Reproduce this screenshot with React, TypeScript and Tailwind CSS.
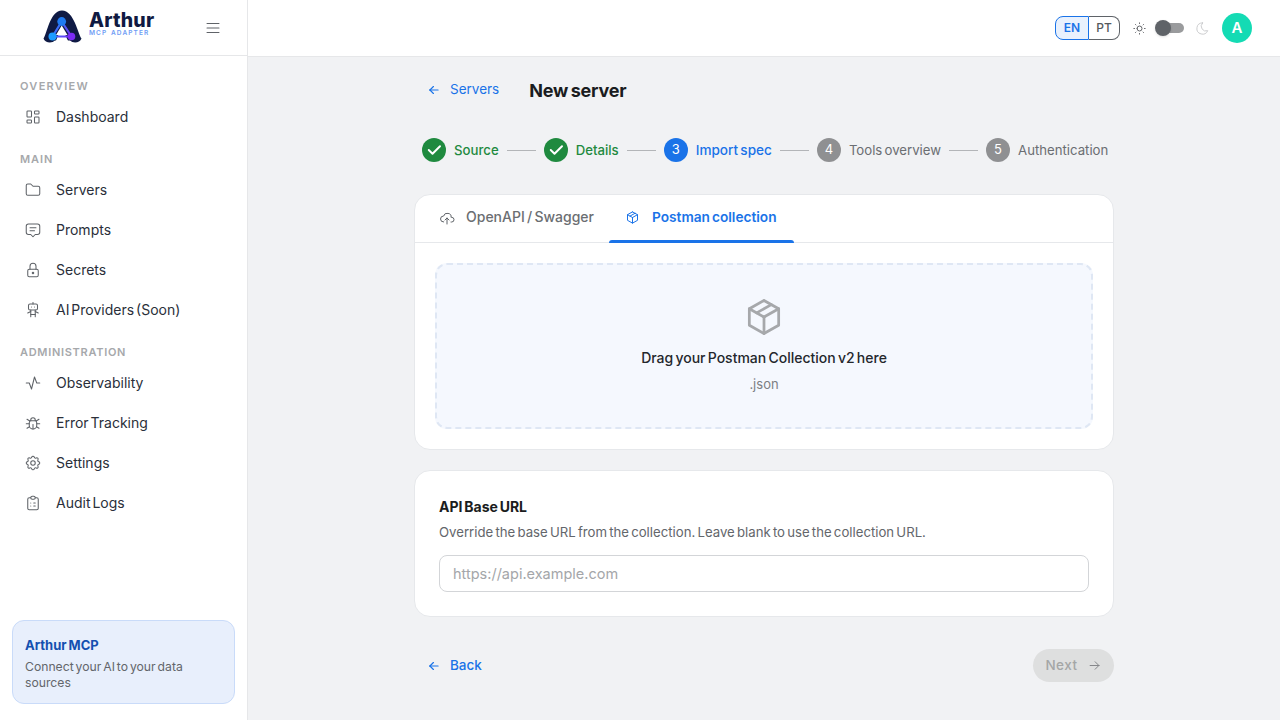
import React from "react";
import {
  TbLayoutDashboard, TbFolder, TbMessage2, TbLock, TbRobot, TbActivity, TbBug, TbSettings, TbClipboardList,
  TbMenu2, TbSun, TbMoon, TbArrowLeft, TbArrowRight, TbCheck, TbCloudUpload, TbPackage,
} from "react-icons/tb";

const font = { fontFamily: '"Inter", "Noto Sans", sans-serif' };

function Logo() {
  return (
    <div className="flex items-center w-[111px] h-[34px] gap-[7px] -mt-[2px]">
      <svg width="39" height="33" viewBox="0 0 39 33" className="shrink-0">
        <defs>
          <linearGradient id="lg" x1="0" y1="0" x2="1" y2="0.6">
            <stop offset="0" stopColor="#1c8cff" />
            <stop offset="1" stopColor="#6a3cf5" />
          </linearGradient>
        </defs>
        <path d="M0.5 28.5C4 24 7 0.5 19 0.5C31 0.5 35 24 38.5 28.5C37 33 30 33.5 27 30.5L12 30.5C9 33.5 2 33 0.5 28.5Z" fill="#0f1a44" />
        <path d="M18.7 17L12 33H26Z" fill="#fff" />
        <path d="M18.7 11.5L9.5 26.5H28.5Z" fill="none" stroke="url(#lg)" strokeWidth="2.2" strokeLinejoin="round" />
        <path d="M18.7 15.5L13 25H24.5Z" fill="#fff" />
        <circle cx="18.7" cy="11.5" r="4.4" fill="#1f7bf2" />
        <circle cx="9.5" cy="26.5" r="4" fill="#1c9cff" />
        <circle cx="28.5" cy="26.5" r="3.8" fill="#7c2cf5" />
      </svg>
      <div className="flex flex-col whitespace-nowrap [word-spacing:1px] -mt-[6px]">
        <span className="text-[19.5px] leading-[20px] font-extrabold text-[#101a42] tracking-[0.2px]">Arthur</span>
        <span className="text-[6.5px] leading-[7px] font-semibold tracking-[1.1px] text-[#6f9df5]">MCP ADAPTER</span>
      </div>
    </div>
  );
}

function Label({ children, className }: { children: React.ReactNode; className: string }) {
  return (
    <div className={`h-[22px] pl-5 pt-[1px] flex items-center text-[11px] font-semibold text-[#a6a8ab] ${className}`}>{children}</div>
  );
}

function Item({ icon: Icon, children }: { icon: React.ComponentType<{ size?: number; strokeWidth?: number; className?: string }>; children: React.ReactNode }) {
  return (
    <div className="h-10 flex items-center pl-[24px] text-[14px] text-[#2a2f3a] [word-spacing:-2px]">
      <Icon size={18} strokeWidth={1.4} className="text-[#5f6368] shrink-0" />
      <span className="ml-[14px] -mt-[1px] whitespace-nowrap">{children}</span>
    </div>
  );
}

function Step({ n, label, state }: { n: number; label: string; state: "done" | "active" | "todo" }) {
  const bg = state === "done" ? "bg-[#1f8a3f]" : state === "active" ? "bg-[#1a73e8]" : "bg-[#8f9092]";
  const tx = state === "done" ? "text-[#1f8a3f] font-medium text-[13.2px]" : state === "active" ? "text-[#1a73e8] font-medium text-[13.6px]" : "text-[#6b6e72] font-normal text-[13.2px]";
  return (
    <div className="flex items-center gap-2 shrink-0">
      <div className={`w-6 h-6 rounded-full flex items-center justify-center text-white text-[13px] ${bg}`}>
        {state === "done" ? <TbCheck size={18} strokeWidth={2.6} /> : n}
      </div>
      <span className={`mt-[1px] whitespace-nowrap ${tx}`}>{label}</span>
    </div>
  );
}

function Line() {
  return <div className="w-[29px] h-px bg-[#b3b5b8] mx-2 shrink-0" />;
}

export default function App() {
  return (
    <div className="w-[1280px] h-[720px] flex bg-[#f1f2f4] overflow-hidden [word-spacing:-1.5px]" style={font}>
      <aside className="w-[248px] h-full bg-white border-r border-[#e6e7e9] flex flex-col shrink-0">
        <div className="h-[56px] border-b border-[#e6e7e9] flex items-center pl-[43px] shrink-0">
          <Logo />
          <TbMenu2 size={18} strokeWidth={1.4} className="text-[#5f6368] ml-[50px]" />
        </div>
        <nav className="pt-[19px] flex-1">
          <Label className="tracking-[1.3px]">OVERVIEW</Label>
          <Item icon={TbLayoutDashboard}>Dashboard</Item>
          <div className="h-[11px]" />
          <Label className="tracking-[0.9px]">MAIN</Label>
          <Item icon={TbFolder}>Servers</Item>
          <Item icon={TbMessage2}>Prompts</Item>
          <Item icon={TbLock}>Secrets</Item>
          <Item icon={TbRobot}>AI Providers (Soon)</Item>
          <div className="h-[11px]" />
          <Label className="tracking-[0.7px]">ADMINISTRATION</Label>
          <Item icon={TbActivity}>Observability</Item>
          <Item icon={TbBug}>Error Tracking</Item>
          <Item icon={TbSettings}>Settings</Item>
          <Item icon={TbClipboardList}>Audit Logs</Item>
        </nav>
        <div className="mx-3 mb-4 h-[84px] rounded-xl bg-[#e8effc] border border-[#c9dbf9] px-3 pt-[14px]">
          <div className="text-[13px] leading-[20px] font-bold text-[#1450b0] [word-spacing:-1px]">Arthur MCP</div>
          <div className="text-[12.2px] leading-4 mt-[4px] text-[#63666b]">Connect your AI to your data sources</div>
        </div>
      </aside>

      <div className="flex-1 flex flex-col min-w-0">
        <header className="h-[57px] bg-white border-b border-[#e6e7e9] flex items-center justify-end pr-[28px] shrink-0">
          <div className="flex h-6 text-[12px]">
            <div className="w-[34px] flex items-center justify-center rounded-l-lg border border-[#1a73e8] bg-[#e9f1fd] text-[#1a73e8] font-semibold">EN</div>
            <div className="w-[31px] flex items-center justify-center rounded-r-lg border border-l-0 border-[#5f6368] text-[#55585c] font-medium">PT</div>
          </div>
          <TbSun size={15} strokeWidth={1.5} className="text-[#55585c] ml-[12px]" />
          <div className="relative w-[24px] h-[10px] rounded-full bg-[#9a9b9d] ml-[13px] mr-[2px]">
            <div className="absolute -left-[5px] -top-[3px] w-4 h-4 rounded-full bg-[#5f6368] shadow-sm" />
          </div>
          <TbMoon size={15} strokeWidth={1.5} className="text-[#c9cacc] ml-[9px]" />
          <div className="w-[30px] h-[30px] rounded-full bg-[#14dbb4] text-white font-semibold text-[15px] flex items-center justify-center ml-[12px]">A</div>
        </header>

        <main className="w-[700px] mx-auto pt-[20px]">
          <div className="flex items-center h-[26px] pl-[13px] whitespace-nowrap">
            <TbArrowLeft size={14} strokeWidth={2} className="text-[#1a73e8]" />
            <span className="text-[13.5px] text-[#1a73e8] ml-[9px] -mt-[1px]">Servers</span>
            <h1 className="text-[18px] font-bold text-[#1a1c20] ml-[30px] tracking-[-0.2px]">New server</h1>
          </div>
          <div className="flex items-center mt-[35px] pl-2">
            <Step n={1} label="Source" state="done" />
            <Line />
            <Step n={2} label="Details" state="done" />
            <Line />
            <Step n={3} label="Import spec" state="active" />
            <Line />
            <Step n={4} label="Tools overview" state="todo" />
            <Line />
            <Step n={5} label="Authentication" state="todo" />
          </div>

          <section className="mt-[32px] h-[256px] bg-white rounded-2xl border border-[#e6e8eb] overflow-hidden">
            <div className="h-[48px] border-b border-[#e6e8eb] flex pl-[8px]">
              <div className="w-[186px] flex items-center pl-[16px] text-[14px] font-medium text-[#6b6e72] whitespace-nowrap">
                <TbCloudUpload size={16} strokeWidth={1.5} className="text-[#5f6368] -mt-[2px]" />
                <span className="ml-[11px] -mt-[4px]">OpenAPI / Swagger</span>
              </div>
              <div className="relative w-[185px] flex items-center pl-[16px] text-[13.7px] font-semibold text-[#1a73e8] whitespace-nowrap">
                <TbPackage size={15} strokeWidth={1.6} className="-mt-[2px]" />
                <span className="ml-[12px] -mt-[2px]">Postman collection</span>
                <div className="absolute left-0 right-0 -bottom-[1px] h-[3px] rounded-t bg-[#1a73e8]" />
              </div>
            </div>
            <div className="p-5">
              <div className="h-[166px] rounded-xl border-2 border-dashed border-[#dfe7f4] bg-[#f5f8fe] flex flex-col items-center pt-[30px]">
                <TbPackage size={44} strokeWidth={1.5} className="text-[#a6a8ab]" />
                <div className="mt-[9px] text-[14px] leading-[20px] font-medium text-[#24272c] whitespace-nowrap">Drag your Postman Collection v2 here</div>
                <div className="mt-[6px] text-[13px] leading-5 text-[#7c7f83]">.json</div>
              </div>
            </div>
          </section>

          <section className="mt-5 h-[147px] bg-white rounded-2xl border border-[#e6e8eb] px-6 pt-[26px]">
            <div className="text-[14px] leading-5 font-bold text-[#1a1c20]">API Base URL</div>
            <div className="text-[13.2px] leading-5 mt-[5px] text-[#63666b] whitespace-nowrap">Override the base URL from the collection. Leave blank to use the collection URL.</div>
            <div className="mt-[13px] h-[37px] rounded-lg border border-[#d3d5d8] flex items-center px-[13px] text-[14.5px] text-[#a4a6a9]">https://api.example.com</div>
          </section>

          <div className="flex items-center justify-between mt-8 h-[33px]">
            <div className="flex items-center pl-[13px] text-[13.5px] font-medium text-[#1a73e8]">
              <TbArrowLeft size={14} strokeWidth={2} />
              <span className="ml-[9px]">Back</span>
            </div>
            <div className="w-[81px] h-[33px] rounded-full bg-[#dedfdf] flex items-center justify-center text-[13.5px] font-medium text-[#a4a6a6]">
              <span className="tracking-[0.5px]">Next</span>
              <TbArrowRight size={15} strokeWidth={1.6} className="text-[#85878a] ml-[9px]" />
            </div>
          </div>
        </main>
      </div>
    </div>
  );
}
